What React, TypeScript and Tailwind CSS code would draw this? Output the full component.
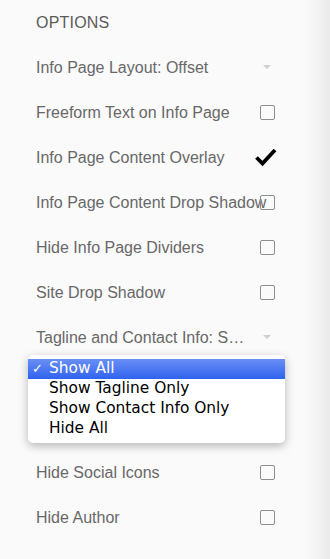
import React from "react";

const Checkbox = () => (
  <div className="w-[15px] h-[15px] rounded-[2px] border-[1.5px] border-[#8e8e8e] bg-transparent" />
);

const Arrow = () => (
  <svg width="8" height="5" viewBox="0 0 8 5"><path d="M0 0 L8 0 L4 4 Z" fill="#cfcfcf" /></svg>
);

const Check = () => (
  <svg width="22" height="21" viewBox="0 0 22 21" className="-ml-[3px]">
    <path d="M1.5 10.5 L7.5 16.5 L20 3" fill="none" stroke="#000" strokeWidth="3.8" strokeLinecap="butt" strokeLinejoin="miter" />
  </svg>
);

type Row = { label: string; kind: "select" | "box" | "check" | "hidden" };

const rows: Row[] = [
  { label: "Info Page Layout: Offset", kind: "select" },
  { label: "Freeform Text on Info Page", kind: "box" },
  { label: "Info Page Content Overlay", kind: "check" },
  { label: "Info Page Content Drop Shadow", kind: "box" },
  { label: "Hide Info Page Dividers", kind: "box" },
  { label: "Site Drop Shadow", kind: "box" },
  { label: "Tagline and Contact Info: S…", kind: "select" },
  { label: "", kind: "hidden" },
  { label: "", kind: "hidden" },
  { label: "Hide Social Icons", kind: "box" },
  { label: "Hide Author", kind: "box" },
];

export default function App() {
  return (
    <div
      className="relative w-[330px] h-[559px] overflow-hidden bg-[linear-gradient(to_right,#fafafa_0px,#fafafa_304px,#f2f2f2_318px,#eaeaea_330px)]"
      style={{ fontFamily: '"Helvetica Neue", "Liberation Sans", Arial, sans-serif' }}
    >
      <div className="flex flex-col">
        <div className="h-[45px] flex items-center pl-[36px] text-[16px] font-medium text-[#5a5a5a] tracking-[0.2px]">
          OPTIONS
        </div>
        {rows.map((r, i) => (
          <div key={i} className="h-[45px] flex items-center pl-[36px] relative">
            <span className="whitespace-nowrap text-[16px] text-[#686868]">{r.label}</span>
            <div className="absolute left-[254px] top-0 h-full w-[26px] flex items-center justify-center">
              {r.kind === "box" && <Checkbox />}
              {r.kind === "select" && <Arrow />}
              {r.kind === "check" && <Check />}
            </div>
          </div>
        ))}
      </div>

      <div
        className="absolute left-[28px] top-[355px] w-[257px] h-[88px] bg-white rounded-[5px] shadow-[0_3px_10px_rgba(0,0,0,0.28)] pt-[4px] text-[15.4px] text-black"
        style={{ fontFamily: '"Lucida Grande", "DejaVu Sans", "Liberation Sans", sans-serif' }}
      >
        <div className="h-[20px] flex items-center bg-[linear-gradient(to_bottom,#6a8ff5,#2f62ef)] text-white">
          <span className="w-[21px] pl-[4px] text-[13px]">✓</span>
          <span className="leading-none">Show All</span>
        </div>
        <div className="h-[20px] flex items-center pl-[21px] leading-none">Show Tagline Only</div>
        <div className="h-[20px] flex items-center pl-[21px] leading-none">Show Contact Info Only</div>
        <div className="h-[20px] flex items-center pl-[21px] leading-none">Hide All</div>
      </div>
    </div>
  );
}
